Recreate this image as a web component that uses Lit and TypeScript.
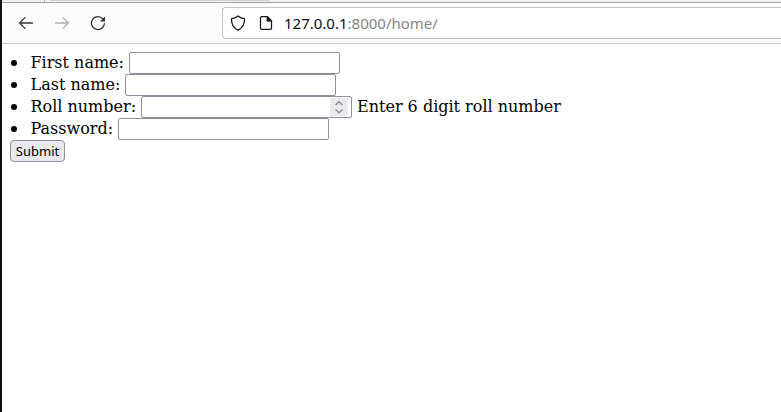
import { LitElement, html, css } from "lit";
import { customElement } from "lit/decorators.js";

interface Field {
  label: string;
  type: string;
  labelWidth: number;
  help?: string;
}

const FIELDS: Field[] = [
  { label: "First name:", type: "text", labelWidth: 98.5 },
  { label: "Last name:", type: "text", labelWidth: 94.5 },
  { label: "Roll number:", type: "number", labelWidth: 110.5, help: "Enter 6 digit roll number" },
  { label: "Password:", type: "password", labelWidth: 87.5 },
];

@customElement("browser-toolbar")
class BrowserToolbar extends LitElement {
  static styles = css`
    :host { display: block; }
    .tabs {
      display: flex;
      height: 2px;
      background: #f0f0f0;
      border-bottom: 1px solid #a3a3a3;
    }
    .edge { width: 42px; border-right: 1px solid #b5b5b5; }
    .active {
      width: 220px;
      height: 1px;
      margin-left: 5px;
      background: #d2d2d2;
    }
    .bar {
      display: flex;
      align-items: center;
      box-sizing: border-box;
      height: 41px;
      padding-left: 16px;
      background: #fbfbfb;
      border-bottom: 1px solid #c9c9c9;
    }
    .nav { display: flex; gap: 20px; flex: none; width: 204px; }
    svg { display: block; flex: none; }
    .back, .reload { color: #333; }
    .forward { color: #b0b0b0; }
    .address {
      display: flex;
      align-items: center;
      box-sizing: border-box;
      flex: 1;
      height: 32px;
      padding-left: 7px;
      border: 1px solid #c4c4c4;
      border-right: 0;
      border-radius: 4px 0 0 4px;
      background: #fff;
      color: #1c1c1c;
    }
    .page { margin-left: 12px; }
    .url {
      margin-left: 10px;
      font: 15px/20px "Noto Sans", "Open Sans", sans-serif;
      color: #858585;
      white-space: nowrap;
    }
    .host { color: #0c0c0d; }
  `;

  render() {
    return html`
      <div class="tabs"><div class="edge"></div><div class="active"></div></div>
      <div class="bar">
        <div class="nav">
          <svg class="back" width="16" height="16" viewBox="0 0 16 16" fill="none" stroke="currentColor" stroke-width="1.3" stroke-linecap="round" stroke-linejoin="round">
            <path d="M14.4 8H1.6M7 2.6 1.6 8 7 13.4" />
          </svg>
          <svg class="forward" width="16" height="16" viewBox="0 0 16 16" fill="none" stroke="currentColor" stroke-width="1.3" stroke-linecap="round" stroke-linejoin="round">
            <path d="M1.6 8h12.8M9 2.6 14.4 8 9 13.4" />
          </svg>
          <svg class="reload" width="16" height="16" viewBox="0 0 16 16">
            <path d="M12.9 3.9A6.5 6.5 0 1 0 14.4 8.7" fill="none" stroke="currentColor" stroke-width="1.3" stroke-linecap="round" />
            <path d="M15 1.4v5H10z" fill="currentColor" />
          </svg>
        </div>
        <div class="address">
          <svg width="16" height="16" viewBox="0 0 16 16" fill="none" stroke="currentColor" stroke-width="1.3" stroke-linejoin="round">
            <path d="M8 .9C6.4 2.3 4 3.3 1.5 3.6c-.3 5.2 1.6 9.1 6.5 11.5 4.9-2.4 6.8-6.3 6.5-11.5C12 3.3 9.6 2.3 8 .9z" />
          </svg>
          <svg class="page" width="16" height="16" viewBox="0 0 16 16">
            <path d="M3.4 1.7h6.1l4 4v7.6a1 1 0 0 1-1 1h-9a1 1 0 0 1-1-1V2.7a1 1 0 0 1 1-1z" fill="none" stroke="currentColor" stroke-width="1.3" stroke-linejoin="round" />
            <path d="M9 1.5v4.7h4.7z" fill="currentColor" stroke="currentColor" stroke-width=".8" />
          </svg>
          <div class="url"><span class="host">127.0.0.1</span>:8000/home/</div>
        </div>
      </div>
    `;
  }
}

@customElement("student-form")
class StudentForm extends LitElement {
  static styles = css`
    :host {
      display: block;
      padding: 8px 0 0 8px;
      font: 16px/22px "DejaVu Serif", serif;
      color: #000;
    }
    ul { margin: 0; padding: 0; list-style: none; }
    .row { display: flex; align-items: center; height: 22px; }
    .dot {
      flex: none;
      width: 6px;
      height: 6px;
      margin: 0 13.5px 0 1px;
      border-radius: 50%;
      background: #000;
    }
    .label { flex: none; white-space: nowrap; }
    .field { display: flex; flex: none; width: 211px; height: 22px; position: relative; }
    input {
      box-sizing: border-box;
      width: 211px;
      height: 22px;
      margin: 0;
      padding: 1px 4px;
      border: 1px solid #8f8f9d;
      border-radius: 2px;
      background: #fff;
      font: 13px "Noto Sans", sans-serif;
      outline: none;
      appearance: none;
    }
    input[type="number"] { appearance: textfield; }
    .spin { position: absolute; right: 4px; top: 2px; background: #e9e9ed; }
    .help { margin-left: 5px; white-space: nowrap; }
    button {
      display: block;
      box-sizing: border-box;
      width: 55px;
      height: 22px;
      margin: 0;
      padding: 0;
      border: 1px solid #8f8f9d;
      border-radius: 4px;
      background: #e9e9ed;
      color: #000;
      font: 13px/19px "Noto Sans", "Open Sans", sans-serif;
      white-space: nowrap;
    }
  `;

  private spinner() {
    return html`<svg class="spin" width="18" height="18" viewBox="0 0 18 18">
      <path d="M5.5 7 9 3.8 12.5 7M5.5 11.5 9 14.7l3.5-3.2" fill="none" stroke="#8f8f9d" stroke-width="1.5" />
    </svg>`;
  }

  render() {
    return html`
      <ul>
        ${FIELDS.map((f) => html`
          <li class="row">
            <span class="dot"></span>
            <span class="label" style="width:${f.labelWidth}px">${f.label}</span>
            <span class="field">
              <input type=${f.type} aria-label=${f.label} />
              ${f.type === "number" ? this.spinner() : ""}
            </span>
            ${f.help ? html`<span class="help">${f.help}</span>` : ""}
          </li>`)}
      </ul>
      <button type="button">Submit</button>
    `;
  }
}

@customElement("app-root")
class AppRoot extends LitElement {
  static styles = css`
    :host {
      display: block;
      box-sizing: border-box;
      height: 100vh;
      overflow: hidden;
      border-left: 2px solid #101012;
      background: #fff;
    }
  `;

  render() {
    return html`<browser-toolbar></browser-toolbar><student-form></student-form>`;
  }
}
